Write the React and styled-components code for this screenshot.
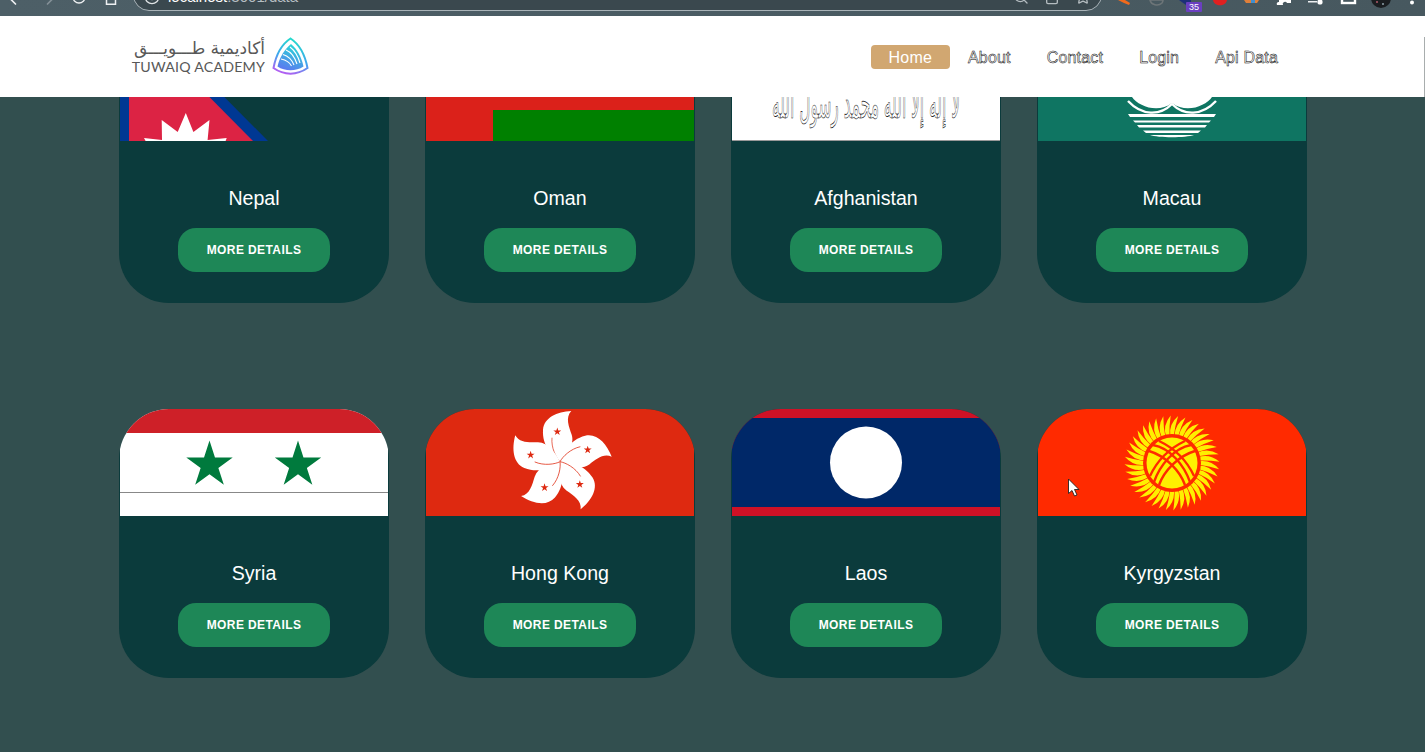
import styled, { createGlobalStyle } from 'styled-components'
import { ChevronLeft, ChevronRight, RotateCw, Info, Search, Share, Star } from 'lucide-react'

const GlobalStyle = createGlobalStyle`
  html, body { margin: 0; padding: 0; background: #324f4f; }
  body { font-family: "Liberation Sans", Arial, sans-serif; }
`

const Page = styled.div`
  position: relative;
  width: 1425px;
  height: 752px;
  overflow: hidden;
  background: #324f4f;
`

/* browser chrome, cut off at the top of the screenshot */
const BrowserBar = styled.div`
  display: flex;
  align-items: flex-end;
  height: 16px;
  overflow: hidden;
  background: linear-gradient(90deg, #4d5f67 0%, #47585f 100%);
  color: #e8eaed;
`

const ToolIcon = styled.span`
  display: flex;
  flex: none;
  margin: 0 0 ${p => p.$mb}px ${p => p.$ml}px;
  color: ${p => p.$dim ? '#849097' : '#eef0f2'};
`

const UrlPill = styled.div`
  display: flex;
  align-items: flex-end;
  flex: none;
  box-sizing: border-box;
  width: 969px;
  height: 40px;
  margin: 0 0 5px 14px;
  padding: 0 10px 5px 10px;
  border: 1px solid #a9b3b8;
  border-radius: 16px;
  background: #3a484e;
`

const UrlText = styled.span`
  margin-left: 8px;
  font-size: 15px;
  line-height: 16px;
  color: #fff;
  & > em { font-style: normal; color: #b6bec2; }
`

const PillIcons = styled.span`
  display: flex;
  gap: 15px;
  margin-left: auto;
  color: #b4bcc0;
`

const Tray = styled.div`
  position: relative;
  flex: none;
  width: 315px;
  height: 16px;
  margin-left: 9px;
`

const Badge = styled.span`
  position: absolute;
  left: 75px;
  top: 2px;
  width: 16px;
  height: 10px;
  border-radius: 1px;
  background: #6a3fc0;
  color: #fff;
  font-size: 9px;
  line-height: 10px;
  text-align: center;
`

const NavBar = styled.nav`
  position: relative;
  z-index: 2;
  display: flex;
  align-items: center;
  justify-content: space-between;
  box-sizing: border-box;
  height: 81px;
  padding: 0 129px 0 133px;
  background: #fff;

  &::after {
    content: "";
    position: absolute;
    top: 21px;
    right: 0;
    bottom: 0;
    width: 1px;
    background: #a8adad;
  }
`

const Logo = styled.div`
  display: flex;
  align-items: center;
  gap: 7px;
`

const LogoWords = styled.div`
  display: flex;
  flex-direction: column;
  align-items: flex-end;
  width: 132px;
  color: #585858;
`

const LogoArabic = styled.span`
  font-family: "DejaVu Sans", sans-serif;
  font-size: 17px;
  line-height: 19px;
  white-space: nowrap;
  direction: rtl;
`

const LogoLatin = styled.span`
  margin-top: 2px;
  font-family: Lato, sans-serif;
  font-size: 14.2px;
  line-height: 14px;
  letter-spacing: 0.2px;
  white-space: nowrap;
`

const NavLinks = styled.ul`
  display: flex;
  margin: 0;
  padding: 0;
  list-style: none;
`

const NavLink = styled.li`
  height: 24px;
  padding: 0 18px;
  border-radius: 4px;
  background: ${p => p.$active ? '#d1a771' : 'transparent'};
  color: #fff;
  font-size: 16px;
  line-height: 25px;
  letter-spacing: 0.18px;
  -webkit-text-stroke: ${p => p.$active ? '0' : '0.5px #000'};
`

const CardGrid = styled.main`
  display: grid;
  grid-template-columns: repeat(4, 270px);
  column-gap: 36px;
  row-gap: 106px;
  margin-top: -63px;
  padding-left: 119px;
`

const Card = styled.article`
  display: flex;
  flex-direction: column;
  align-items: center;
  box-sizing: border-box;
  height: 269px;
  padding: 0 1px;
  overflow: hidden;
  border-radius: 50px;
  background: #0b3b3c;
`

const FlagBox = styled.svg`
  display: block;
  flex: none;
  width: 268px;
  height: 107px;
`

const CountryName = styled.h2`
  margin: 46px 0 0;
  color: #fff;
  font-size: 19.6px;
  font-weight: 400;
  line-height: 23px;
`

const MoreButton = styled.button`
  box-sizing: border-box;
  width: 152px;
  height: 44px;
  margin-top: 18px;
  padding: 0;
  border: 0;
  border-radius: 18px;
  background: #1e8757;
  color: #fff;
  font-family: inherit;
  font-size: 12px;
  font-weight: 700;
  letter-spacing: 0.4px;
`

const Cursor = styled.svg`
  position: absolute;
  left: 1067px;
  top: 478px;
  z-index: 3;
`

const starPoints = (cx, cy, R) => {
  const pts = []
  for (let i = 0; i < 10; i++) {
    const r = i % 2 ? R * 0.382 : R
    const a = (i * Math.PI) / 5 - Math.PI / 2
    pts.push(`${(cx + r * Math.cos(a)).toFixed(2)},${(cy + r * Math.sin(a)).toFixed(2)}`)
  }
  return pts.join(' ')
}

const NepalFlag = () => (
  <>
    <rect width="268" height="107" fill="#0b3b3c" />
    <polygon points="0,0 42,0 148,107 0,107" fill="#003893" />
    <polygon points="9,0 27,0 133,107 9,107" fill="#dc2344" />
    <polygon
      points="24,104 42,106 41.7,86 57.7,98 65.8,79 73.4,98 89.5,86 87.6,106 106.7,104 105.6,107 25.6,107"
      fill="#fff"
    />
  </>
)

const OmanFlag = () => (
  <>
    <rect width="268" height="107" fill="#db211a" />
    <rect x="67" y="0" width="201" height="36" fill="#fff" />
    <rect x="67" y="76" width="201" height="31" fill="#008000" />
  </>
)

const AfghanFlag = () => (
  <>
    <rect width="268" height="107" fill="#fff" />
    <rect y="106" width="268" height="1" fill="#999" />
    <text
      x="134"
      y="84"
      textAnchor="middle"
      direction="rtl"
      fontFamily="DejaVu Sans, sans-serif"
      fontSize="42"
      fill="#fff"
      stroke="#000"
      strokeWidth="0.7"
      textLength="188"
      lengthAdjust="spacingAndGlyphs"
    >
      لا إله إلا الله محمد رسول الله
    </text>
  </>
)

const MacauFlag = () => (
  <>
    <rect width="268" height="107" fill="#0f7562" />
    <path d="M94 50 H174 V63 C168 72 148 80 134 69 C120 80 100 72 94 63Z" fill="#fff" />
    <path d="M90 67 C104 82 122 82 134 70 C146 82 164 82 178 67" fill="none" stroke="#fff" strokeWidth="2.4" />
    <path d="M90 80 H178 L176 83 H92Z M95 86.5 H173 L171 88.5 H97Z M99 91 H169 L167 93.5 H101Z M105 96.5 H163 L160 99 H108Z M112 101 H156 C148 104 120 104 112 101Z" fill="#fff" />
  </>
)

const SyriaFlag = () => (
  <>
    <rect width="268" height="107" fill="#fff" />
    <rect width="268" height="24" fill="#ce2028" />
    <rect y="83" width="268" height="1" fill="#888" />
    <polygon points={starPoints(89.5, 56, 24.4)} fill="#007a3d" />
    <polygon points={starPoints(178, 56, 24.4)} fill="#007a3d" />
  </>
)

const petalAngles = [0, 72, 144, 216, 288]

const HongKongFlag = () => (
  <>
    <rect width="268" height="107" fill="#de2910" />
    <g transform="translate(134 52.7)">
      {petalAngles.map(a => (
        <g key={a} transform={`rotate(${a})`}>
          <path d="M0 0 C-8 -6 -18 -16 -17 -32 C-16 -44 -3 -50 11.3 -50.7 C5 -44 9 -35 11.7 -27 C15 -17 6 -6 0 0Z" fill="#fff" />
          <path d="M0 0 C-4 -4 -9 -14 -8 -24" fill="none" stroke="#de2910" strokeWidth="0.7" />
          <polygon points={starPoints(-2.7, -30, 4.2)} fill="#de2910" />
        </g>
      ))}
    </g>
  </>
)

const LaosFlag = () => (
  <>
    <rect width="268" height="107" fill="#ce1126" />
    <rect y="9" width="268" height="89" fill="#002868" />
    <circle cx="134" cy="53.5" r="36" fill="#fff" />
  </>
)

const rayPath = i => {
  const a = (i * Math.PI) / 20
  const w = 0.065
  const at = (ang, r) => `${(r * Math.cos(ang)).toFixed(2)} ${(r * Math.sin(ang)).toFixed(2)}`
  return `M${at(a - w, 27)} Q${at(a - w * 1.4, 39)} ${at(a + 0.13, 47.5)} Q${at(a + w * 1.2, 37)} ${at(a + w, 27)}Z`
}
const rays = Array.from({ length: 40 }, (_, i) => rayPath(i))

const KyrgyzFlag = () => (
  <>
    <rect width="268" height="107" fill="#ff2a00" />
    <g transform="translate(134 54)">
      {rays.map(d => <path key={d} d={d} fill="#ffef00" />)}
      <circle r="29" fill="#ff2a00" />
      <circle r="25.5" fill="#ffef00" />
      <g fill="none" stroke="#ff2a00" strokeWidth="2.4">
        <path d="M-18 19 C-12 2 2 -15 19 -18" />
        <path d="M-22 13 C-15 -2 -4 -14 13 -22" />
        <path d="M-13 22 C-8 8 6 -7 23 -12" />
        <path d="M18 19 C12 2 -2 -15 -19 -18" />
        <path d="M22 13 C15 -2 4 -14 -13 -22" />
        <path d="M13 22 C8 8 -6 -7 -23 -12" />
      </g>
    </g>
  </>
)

const countries = [
  { name: 'Nepal', Flag: NepalFlag },
  { name: 'Oman', Flag: OmanFlag },
  { name: 'Afghanistan', Flag: AfghanFlag },
  { name: 'Macau', Flag: MacauFlag },
  { name: 'Syria', Flag: SyriaFlag },
  { name: 'Hong Kong', Flag: HongKongFlag },
  { name: 'Laos', Flag: LaosFlag },
  { name: 'Kyrgyzstan', Flag: KyrgyzFlag },
]

const navItems = ['Home', 'About', 'Contact', 'Login', 'Api Data']

const LogoMark = () => (
  <svg width="37" height="39" viewBox="0 0 37 39">
    <defs>
      <linearGradient id="markLine" x1="0.6" y1="0" x2="0.3" y2="1">
        <stop offset="0" stopColor="#25dccb" />
        <stop offset="0.55" stopColor="#3fa6ee" />
        <stop offset="1" stopColor="#b65cf2" />
      </linearGradient>
      <linearGradient id="markFill" x1="0.7" y1="0" x2="0.3" y2="1">
        <stop offset="0" stopColor="#25dcd6" />
        <stop offset="1" stopColor="#5d78f0" />
      </linearGradient>
    </defs>
    <path d="M18.5 1.5 C27 7 33 18 35.5 31 C25 38.5 12 38.5 1.5 31 C4 18 10 7 18.5 1.5Z" fill="none" stroke="url(#markLine)" strokeWidth="2" />
    <path d="M19 7 C25 12 29.5 20 31.5 29.5 C24 34.5 13 34.5 5.5 29.5 C7.5 20 13 12 19 7Z" fill="url(#markFill)" />
    <g fill="none" stroke="#fff" strokeWidth="1.1">
      <path d="M9 22 C14 23 18 26 19.5 29" />
      <path d="M11 17.5 C16 19 20 23 22 28" />
      <path d="M14 13 C19 15 23 21 25 27" />
      <path d="M18 10 C22 13 26 19 28 26" />
    </g>
  </svg>
)

const HomeGlyph = () => (
  <svg width="16" height="16" viewBox="0 0 16 16">
    <path d="M3.5 -2 V4.2 H12.5 V-2" fill="none" stroke="currentColor" strokeWidth="1.5" />
  </svg>
)

const ExtensionIcons = () => (
  <svg width="315" height="16" viewBox="0 0 315 16">
    <path d="M7 0 L13 3 L18 5 L19 3 L14 0Z" fill="#f26a1b" />
    <path d="M39 0 A7 6 0 0 0 51 3 A5 5 0 0 0 52 0Z" fill="none" stroke="#6d7578" strokeWidth="1.6" />
    <path d="M68 0 H80 V5 H75Z" fill="#1d2f78" />
    <path d="M102 0 H116 C115 7 103 7 102 0Z" fill="#e02020" />
    <path d="M133 0 H148 L146 3 H135Z" fill="#e0803a" />
    <path d="M140 0 H144 V3 H140Z" fill="#3f8fd0" />
    <path d="M166 5 H172 A2 2 0 0 1 176 3 H180 V0 H168 V2 A2 2 0 0 0 166 5Z" fill="#fff" />
    <path d="M197 2.5 H206 V1 H197Z" fill="#eef0f2" />
    <circle cx="209" cy="2" r="2.6" fill="#fff" />
    <rect x="231" y="-4" width="13" height="7" fill="none" stroke="#fff" strokeWidth="2.4" />
    <circle cx="270" cy="-2" r="10" fill="#1a1d20" />
    <circle cx="266" cy="2" r="1" fill="#b05a6a" />
    <circle cx="272" cy="4" r="1" fill="#8fa0a8" />
    <circle cx="301" cy="2.5" r="2" fill="#fff" />
  </svg>
)

function App() {
  return (
    <Page>
      <GlobalStyle />
      <BrowserBar>
        <ToolIcon $ml={3} $mb={7}><ChevronLeft size={20} /></ToolIcon>
        <ToolIcon $ml={17} $mb={7} $dim><ChevronRight size={20} /></ToolIcon>
        <ToolIcon $ml={11} $mb={11}><RotateCw size={16} /></ToolIcon>
        <ToolIcon $ml={16} $mb={0}><HomeGlyph /></ToolIcon>
        <UrlPill>
          <Info size={16} color="#dfe3e5" />
          <UrlText>localhost<em>:3001/data</em></UrlText>
          <PillIcons>
            <Search size={16} />
            <Share size={16} />
            <Star size={16} />
          </PillIcons>
        </UrlPill>
        <Tray>
          <ExtensionIcons />
          <Badge>35</Badge>
        </Tray>
      </BrowserBar>

      <NavBar>
        <Logo>
          <LogoWords>
            <LogoArabic>أكاديمية طـــويـــق</LogoArabic>
            <LogoLatin>TUWAIQ ACADEMY</LogoLatin>
          </LogoWords>
          <LogoMark />
        </Logo>
        <NavLinks>
          {navItems.map((item, i) => (
            <NavLink key={item} $active={i === 0}>{item}</NavLink>
          ))}
        </NavLinks>
      </NavBar>

      <CardGrid>
        {countries.map(({ name, Flag }) => (
          <Card key={name}>
            <FlagBox viewBox="0 0 268 107"><Flag /></FlagBox>
            <CountryName>{name}</CountryName>
            <MoreButton>MORE DETAILS</MoreButton>
          </Card>
        ))}
      </CardGrid>

      <Cursor width="14" height="20" viewBox="0 0 14 20">
        <path d="M1.5 1 V15.5 L5 12.5 L7.5 18 L10 17 L7.5 11.5 H12Z" fill="#fff" stroke="#222" strokeWidth="0.9" />
      </Cursor>
    </Page>
  )
}

export default App
